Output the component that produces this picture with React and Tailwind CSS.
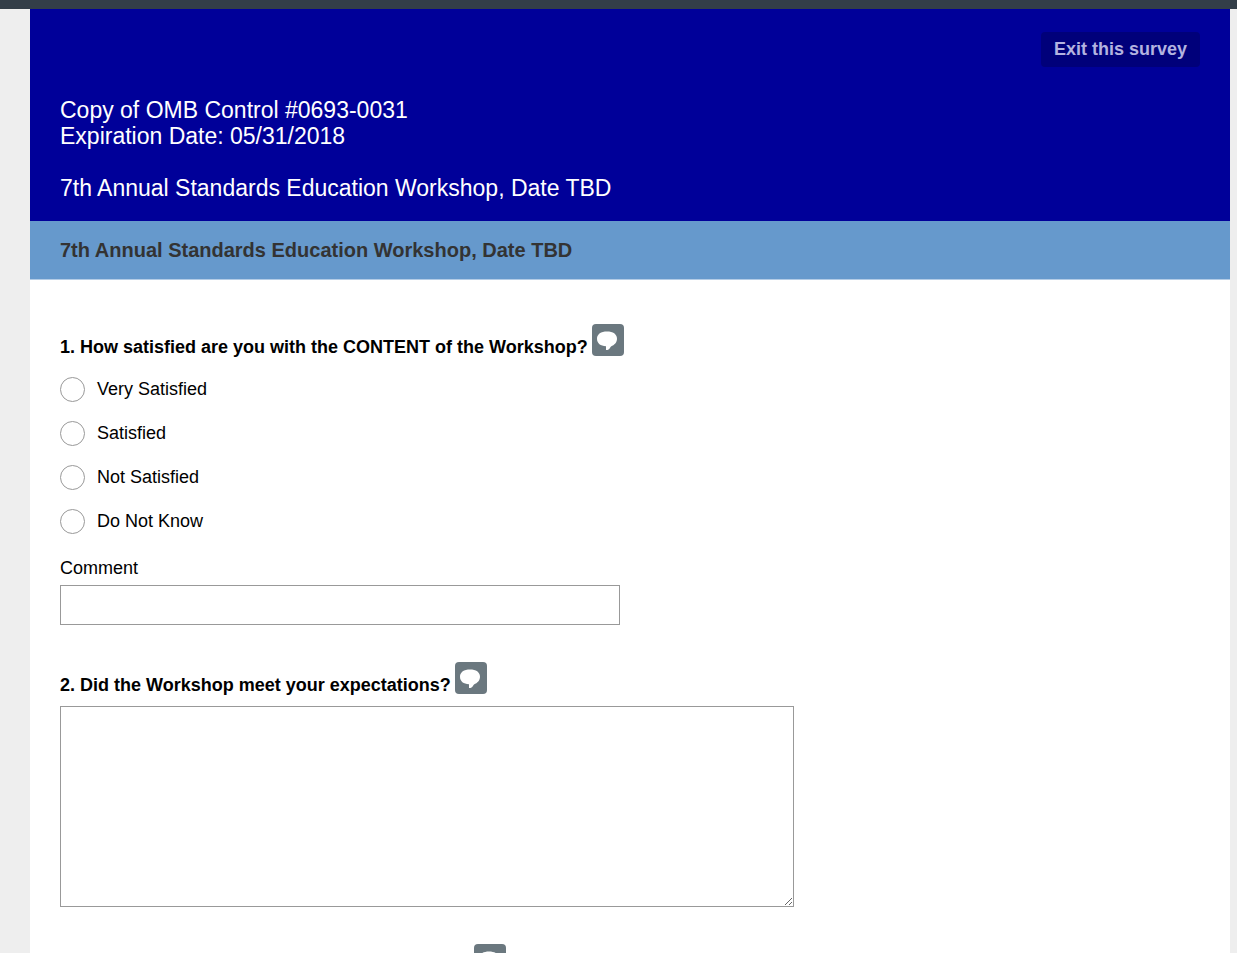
const OPTIONS = ['Very Satisfied', 'Satisfied', 'Not Satisfied', 'Do Not Know']

export default function App() {
  return (
    <div className="h-screen overflow-hidden bg-[#eeeeee] font-['Liberation_Sans',Arial,sans-serif] text-black">
      <div className="h-[9px] bg-[#333e48]" />
      <div className="ml-[30px] mr-[7px] min-h-screen bg-white">
        <Header />

        <div className="border-b border-[#b3cce6] bg-[#6699cc] px-[30px] py-4">
          <h2 className="text-[20px] leading-[26px] font-bold text-[#333333]">
            7th Annual Standards Education Workshop, Date TBD
          </h2>
        </div>

        <form className="px-[30px] pt-11">
          <fieldset>
            <legend className="flex items-start gap-1">
              <span className="pt-3 text-[18px] leading-[22px] font-bold">
                1. How satisfied are you with the CONTENT of the Workshop?
              </span>
              <CommentButton />
            </legend>
            <div className="mt-[9px] flex flex-col">
              {OPTIONS.map(option => (
                <label key={option} className="flex h-11 items-center gap-3 text-[18px] leading-[22px]">
                  <input
                    type="radio"
                    name="content"
                    value={option}
                    className="size-[25px] shrink-0 appearance-none rounded-full border border-[#999999] bg-white checked:border-[7px]"
                  />
                  {option}
                </label>
              ))}
            </div>
            <label htmlFor="comment" className="mt-[14px] block text-[18px] leading-[22px]">Comment</label>
            <input
              id="comment"
              type="text"
              className="mt-[6px] block h-10 w-full max-w-[560px] border border-[#999999] bg-white px-2 text-[18px]"
            />
          </fieldset>

          <div className="mt-[37px] flex items-start gap-1">
            <label htmlFor="expectations" className="pt-3 text-[18px] leading-[22px] font-bold">
              2. Did the Workshop meet your expectations?
            </label>
            <CommentButton />
          </div>
          <textarea
            id="expectations"
            className="mt-[10px] block h-[201px] w-full max-w-[734px] resize border border-[#999999] bg-white p-2 text-[18px]"
          />

          {/* next question starts at the fold */}
          <div className="mt-[37px] flex pl-[414px]">
            <CommentButton />
          </div>
        </form>
      </div>
    </div>
  )
}

function Header() {
  return (
    <header className="flex flex-col bg-[#000099] px-[30px] pt-[23px] pb-5">
      <button
        type="button"
        className="self-end rounded bg-[#00007a] px-[13px] py-[6px] text-[18px] leading-[23px] font-bold text-[#b3b3e0]"
      >
        Exit this survey
      </button>
      <h1 className="mt-[30px] text-[23px] leading-[26px] text-white">
        Copy of OMB Control #0693-0031
        <br />
        Expiration Date: 05/31/2018
        <br />
        <br />
        7th Annual Standards Education Workshop, Date TBD
      </h1>
    </header>
  )
}

function CommentButton() {
  return (
    <button type="button" aria-label="Add comment" className="size-8 shrink-0 rounded-sm bg-[#6b787f]">
      <svg viewBox="0 0 32 32" className="size-8" fill="white">
        <path d="M15 7.500C9 7.500 5 10 5 14.800C5 19.500 8.500 22 14 22.300V26H15.500C17 25.500 18 24 19 22.500C22.500 21 25 18.500 25 14.800C25 10 21 7.500 15 7.500Z" />
      </svg>
    </button>
  )
}
